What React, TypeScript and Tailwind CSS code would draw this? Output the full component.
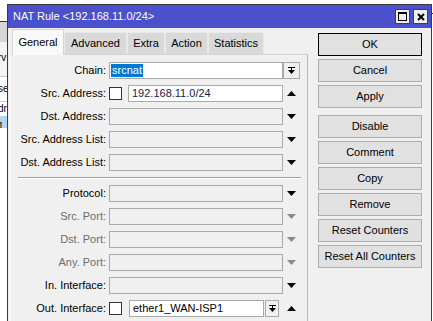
import React from "react";

type Field = {
  label: string;
  kind: "combo" | "check" | "plain" | "checkCombo";
  value?: string;
  arrow?: "up" | "down" | "none";
  disabled?: boolean;
};

const topFields: Field[] = [
  { label: "Chain:", kind: "combo", value: "srcnat", arrow: "none" },
  { label: "Src. Address:", kind: "check", value: "192.168.11.0/24", arrow: "up" },
  { label: "Dst. Address:", kind: "plain", arrow: "down" },
  { label: "Src. Address List:", kind: "plain", arrow: "down" },
  { label: "Dst. Address List:", kind: "plain", arrow: "down" },
];

const bottomFields: Field[] = [
  { label: "Protocol:", kind: "plain", arrow: "down" },
  { label: "Src. Port:", kind: "plain", arrow: "down", disabled: true },
  { label: "Dst. Port:", kind: "plain", arrow: "down", disabled: true },
  { label: "Any. Port:", kind: "plain", arrow: "down", disabled: true },
  { label: "In. Interface:", kind: "plain", arrow: "down" },
  { label: "Out. Interface:", kind: "checkCombo", value: "ether1_WAN-ISP1", arrow: "up" },
];

const tabs = [
  { name: "General", w: "w-[52px]" },
  { name: "Advanced", w: "w-[63px]" },
  { name: "Extra", w: "w-[38px]" },
  { name: "Action", w: "w-[43px]" },
  { name: "Statistics", w: "w-[56px]" },
];

const buttons = [
  "OK",
  "Cancel",
  "Apply",
  "Disable",
  "Comment",
  "Copy",
  "Remove",
  "Reset Counters",
  "Reset All Counters",
];

const Triangle = ({ up, disabled }: { up?: boolean; disabled?: boolean }) => (
  <div className="w-[17px] h-[17px] flex items-center justify-center">
    <svg width="9" height="5" viewBox="0 0 9 5">
      <polygon
        points={up ? "0,5 9,5 4.5,0" : "0,0 9,0 4.5,5"}
        fill={disabled ? "#8a8a8a" : "#000"}
      />
    </svg>
  </div>
);

const DropButton = ({ w }: { w: string }) => (
  <div
    className={`${w} h-[17px] border border-[#a9a9a9] bg-[#f0f0f0] flex items-center justify-center`}
  >
    <svg width="7" height="7" viewBox="0 0 7 7">
      <rect x="0" y="0" width="7" height="1" fill="#000" />
      <rect x="3" y="1" width="1" height="2" fill="#000" />
      <polygon points="0,3 7,3 3.5,7" fill="#000" />
    </svg>
  </div>
);

const Row = ({ f }: { f: Field }) => (
  <div className="h-[23px] flex items-start pt-[4px]">
    <div
      className={`w-[95px] h-[17px] flex items-center justify-end whitespace-nowrap ${
        f.disabled ? "text-[#6d6d6d]" : "text-black"
      }`}
    >
      {f.label}
    </div>
    <div className="ml-[3px] flex items-center">
      {f.kind === "combo" && (
        <>
          <div className="w-[174px] h-[17px] border border-[#a9a9a9] bg-white flex items-center pl-[1px]">
            <span className="bg-[#0078d7] text-white h-[13px] leading-[13px] px-[1px]">
              {f.value}
            </span>
          </div>
          <DropButton w="w-[17px]" />
        </>
      )}
      {f.kind === "check" && (
        <>
          <div className="w-[13px] h-[13px] border border-[#333] bg-white" />
          <div className="ml-[6px] w-[155px] h-[17px] border border-[#a9a9a9] bg-white flex items-center pl-[3px] text-[#1b1b4a]">
            {f.value}
          </div>
          <Triangle up />
        </>
      )}
      {f.kind === "plain" && (
        <>
          <div className="w-[174px] h-[17px] border border-[#a9a9a9] bg-[#f0f0f0]" />
          <Triangle disabled={f.disabled} />
        </>
      )}
      {f.kind === "checkCombo" && (
        <>
          <div className="w-[13px] h-[13px] border border-[#333] bg-white" />
          <div className="ml-[7px] w-[135px] h-[17px] border border-[#a9a9a9] bg-white flex items-center pl-[3px] text-black">
            {f.value}
          </div>
          <div className="ml-[1px]">
            <DropButton w="w-[14px]" />
          </div>
          <div className="w-[4px]" />
          <Triangle up />
        </>
      )}
    </div>
  </div>
);

const BackgroundStrip = () => (
  <div className="w-[7px] h-full overflow-hidden flex flex-col text-black text-[10px]">
    <div className="h-[21px] bg-white shrink-0" />
    <div className="h-[1px] bg-[#333] shrink-0" />
    <div className="h-[20px] bg-[#d6d6d6] shrink-0" />
    <div className="h-[35px] bg-[#f4f4f4] shrink-0 flex items-end pb-[13px] border-b border-[#c8c8c8]">
      <span className="-ml-[2px]">rv</span>
    </div>
    <div className="h-[25px] bg-white shrink-0 flex items-center border-b border-[#c8c8c8]">
      <span className="-ml-[2px]">se</span>
    </div>
    <div className="h-[14px] bg-white shrink-0 flex items-center">
      <span className="-ml-[2px]">dr</span>
    </div>
    <div className="h-[12px] bg-[#b7d3f2] shrink-0 flex items-center">
      <span className="-ml-[2px]">. 1</span>
    </div>
    <div className="flex-1 bg-white" />
  </div>
);

export default function App() {
  return (
    <div className="relative w-[433px] h-[321px] overflow-hidden bg-white font-['Liberation_Sans',Arial,sans-serif] text-[11px] leading-none">
      <div className="flex h-full">
        <BackgroundStrip />
        <div className="flex-1 flex flex-col">
          <div className="h-[13px]" />
          <div className="h-[1px] bg-[#333] ml-auto w-[4px]" />
        </div>
      </div>

      {/* dialog window */}
      <div className="absolute left-[7px] top-[4px] w-[425px] h-[330px] overflow-hidden border border-[#3a3a3a] bg-[#f0f0f0] flex flex-col">
        <div className="h-[23px] shrink-0 bg-[#4b50cc] flex items-center pl-[5px] pr-[3px] text-white text-[11px]">
          <span>NAT Rule &lt;192.168.11.0/24&gt;</span>
          <div className="ml-auto flex gap-[3px]">
            <div className="w-[15px] h-[15px] border border-[#404040] bg-[#f0f0f0] flex items-center justify-center">
              <svg width="9" height="9" viewBox="0 0 9 9">
                <rect x="0.5" y="0.5" width="8" height="8" fill="none" stroke="#000" />
                <rect x="0" y="0" width="9" height="2" fill="#000" />
              </svg>
            </div>
            <div className="w-[15px] h-[15px] border border-[#404040] bg-[#f0f0f0] flex items-center justify-center">
              <svg width="8" height="8" viewBox="0 0 8 8">
                <path d="M1 1 L7 7 M7 1 L1 7" stroke="#000" strokeWidth="2" />
              </svg>
            </div>
          </div>
        </div>

        <div className="flex pl-[2px] shrink-0">
          {/* tab control */}
          <div className="w-[298px] flex flex-col">
            <div className="h-[26px] flex items-end pl-[2px]">
              {tabs.map((t, i) =>
                i === 0 ? (
                  <div
                    key={t.name}
                    className={`${t.w} h-[26px] -mb-[1px] relative z-10 bg-[#f9f9f9] border border-b-0 border-[#d4d4d4] flex items-center justify-center pb-[1px]`}
                  >
                    {t.name}
                  </div>
                ) : (
                  <div
                    key={t.name}
                    className={`${t.w} h-[22px] bg-[#d9d9d9] border border-b-0 border-[#e9e9e9] flex items-center justify-center`}
                  >
                    {t.name}
                  </div>
                ),
              )}
            </div>
            <div className="border border-[#b9b9b9] border-t-[#d4d4d4] border-l-[#ffffff] h-[300px] pt-[3px]">
              {topFields.map((f) => (
                <Row key={f.label} f={f} />
              ))}
              <div className="mt-[4px] ml-[7px] mr-[6px] border-t border-[#a0a0a0] border-b border-b-white" />
              <div className="mt-[2px]">
                {bottomFields.map((f) => (
                  <Row key={f.label} f={f} />
                ))}
              </div>
            </div>
          </div>

          {/* button column */}
          <div className="ml-[10px] w-[104px] flex flex-col pt-[5px] gap-[3px]">
            {buttons.map((b, i) => (
              <div
                key={b}
                className={`h-[23px] flex items-center justify-center bg-[#e1e1e1] border ${
                  i === 0 ? "border-black" : "border-[#adadad]"
                } ${i === 3 ? "mt-[4px]" : ""}`}
              >
                {b}
              </div>
            ))}
          </div>
        </div>
      </div>
    </div>
  );
}
